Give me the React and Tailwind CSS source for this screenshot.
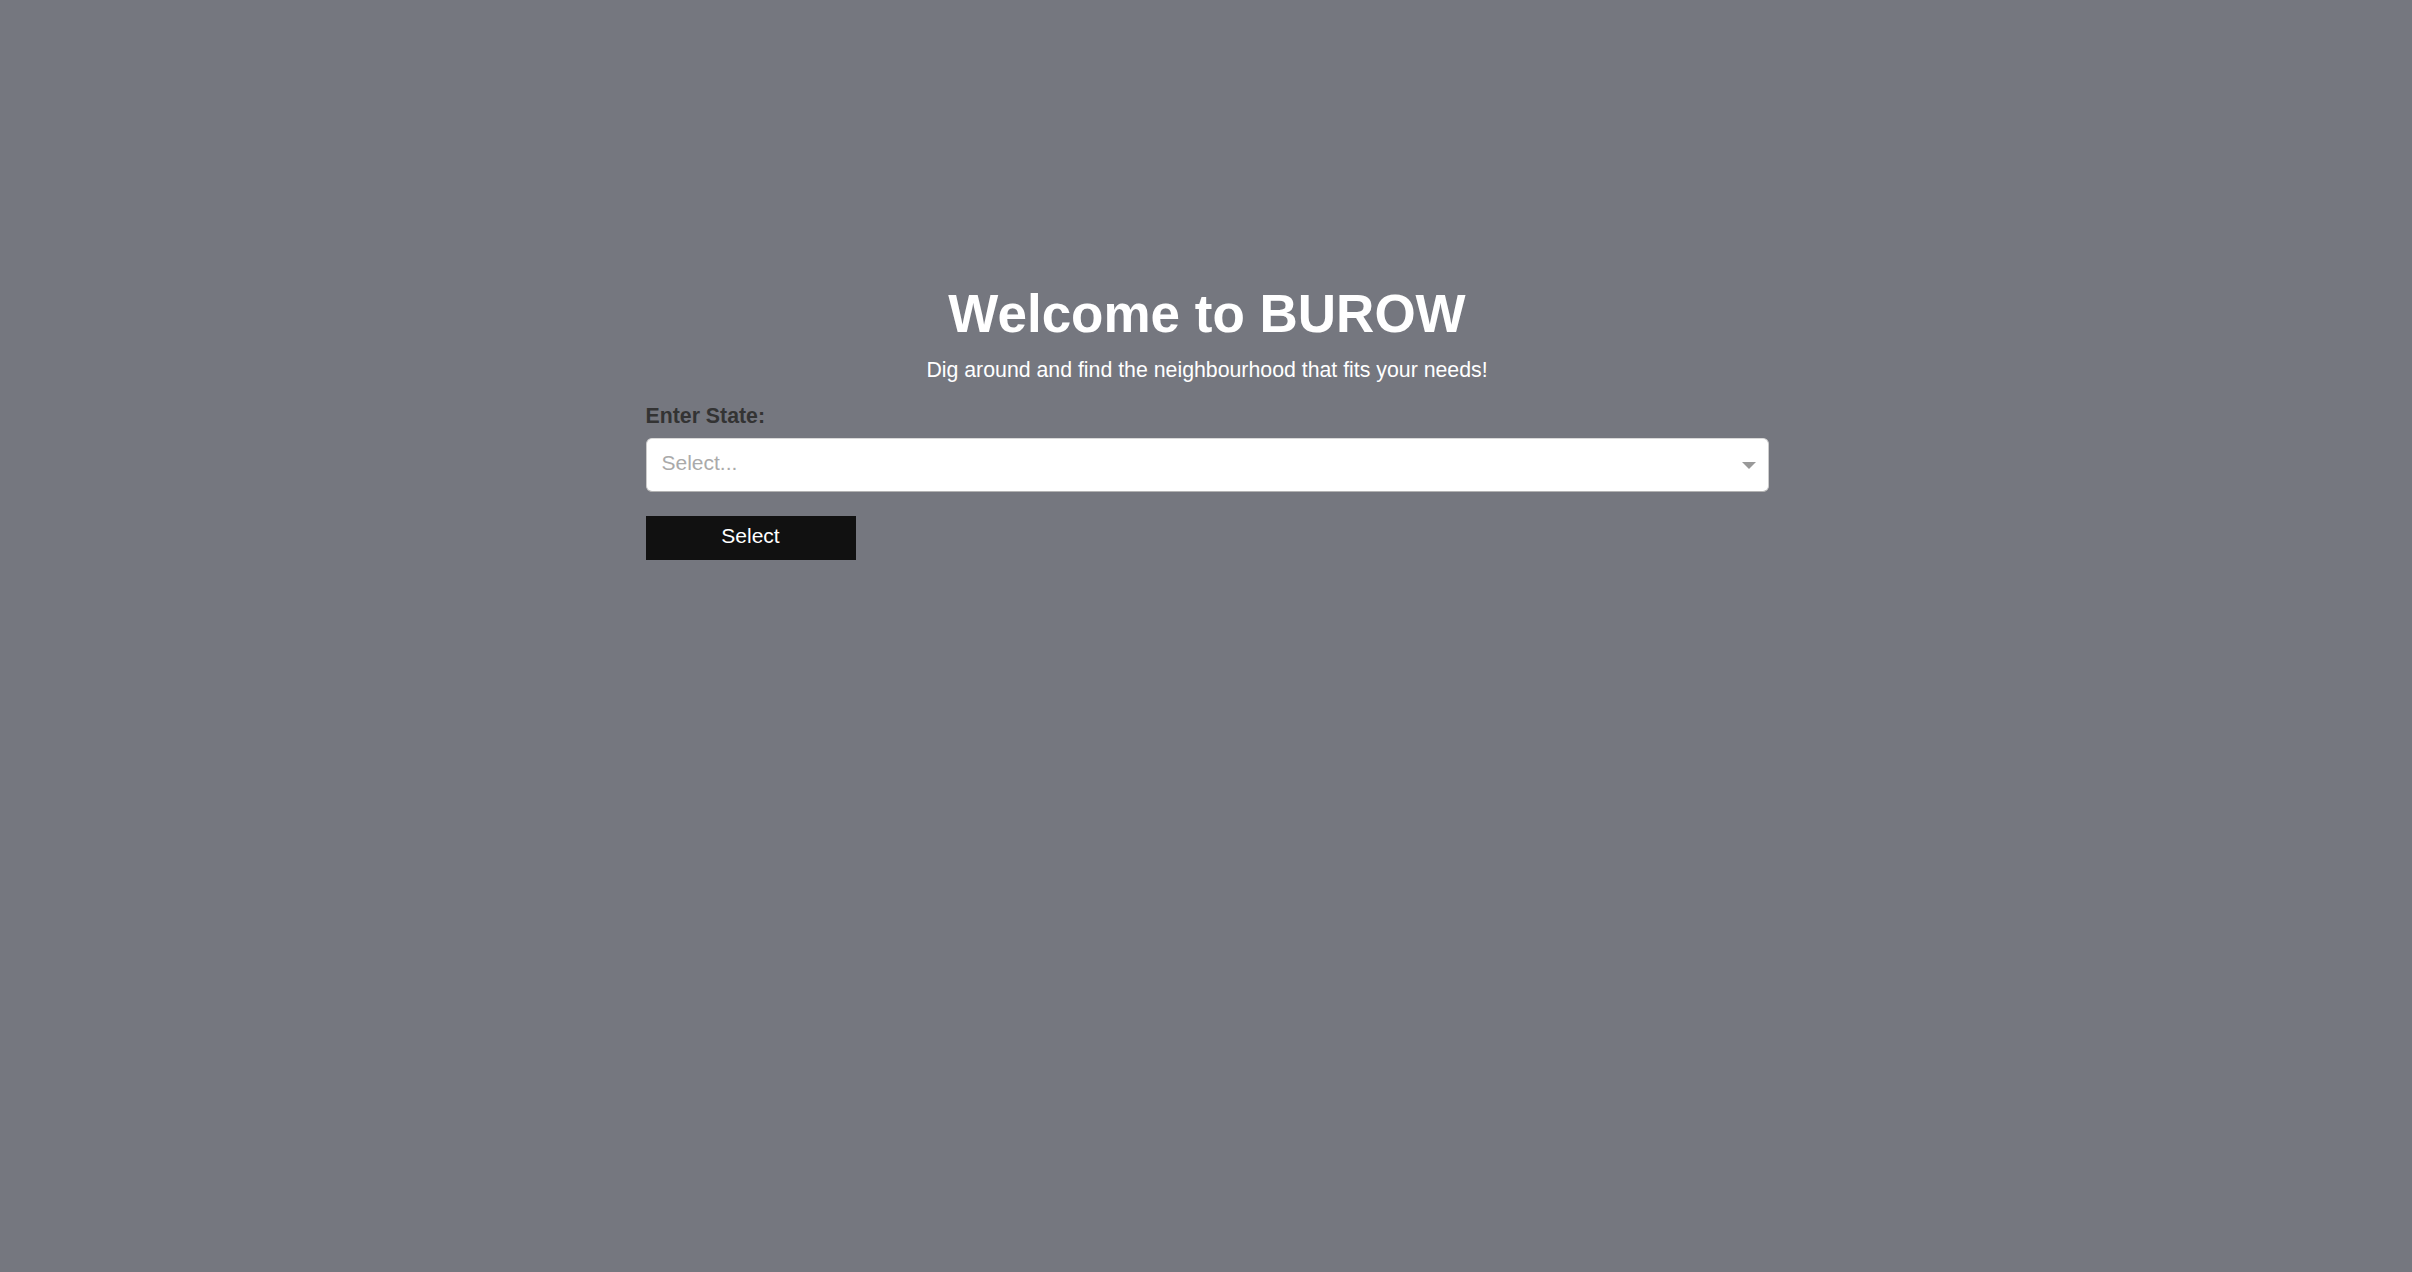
import { useState } from 'react';

const STATES = ['Alabama', 'Alaska', 'Arizona', 'California', 'New York', 'Texas'];

export default function App() {
  const [state, setState] = useState(null);

  return (
    <div className="min-h-screen bg-[#75777f] pl-[2px] font-['Liberation_Sans',Arial,sans-serif]">
      <main className="mx-auto w-[1123px] pt-[285px]">
        <h1 className="text-center text-[53px] font-bold leading-[58px] text-white">Welcome to BUROW</h1>
        <p className="mt-[12px] text-center text-[21.3px] leading-[30px] text-white">
          Dig around and find the neighbourhood that fits your needs!
        </p>

        <form
          className="mt-[16px]"
          onSubmit={(e) => {
            e.preventDefault();
          }}
        >
          <label className="block text-[21.3px] font-bold leading-[30px] text-[#333]">Enter State:</label>
          <div className="relative mt-[7px] flex h-[54px] items-center rounded-[6px] border border-[#ccc] border-t-[#d9d9d9] border-b-[#b3b3b3] bg-white pb-[4px] pl-[15px]">
            <span className="text-[21px] leading-[30px] text-[#aaa]">{state || 'Select...'}</span>
            <span className="absolute right-[12px] top-[23px] h-0 w-0 border-x-[7px] border-t-[7px] border-x-transparent border-t-[#999]" />
            <select
              value={state || ''}
              onChange={(e) => setState(e.target.value)}
              className="absolute inset-0 cursor-pointer opacity-0"
              aria-label="State"
            >
              <option value="" disabled>
                Select...
              </option>
              {STATES.map((s) => (
                <option key={s} value={s}>
                  {s}
                </option>
              ))}
            </select>
          </div>

          <button
            type="submit"
            className="mt-[24px] flex h-[44px] w-[210px] items-center justify-center bg-[#111] pb-[4px] text-[21px] leading-[30px] text-white"
          >
            Select
          </button>
        </form>
      </main>
    </div>
  );
}
